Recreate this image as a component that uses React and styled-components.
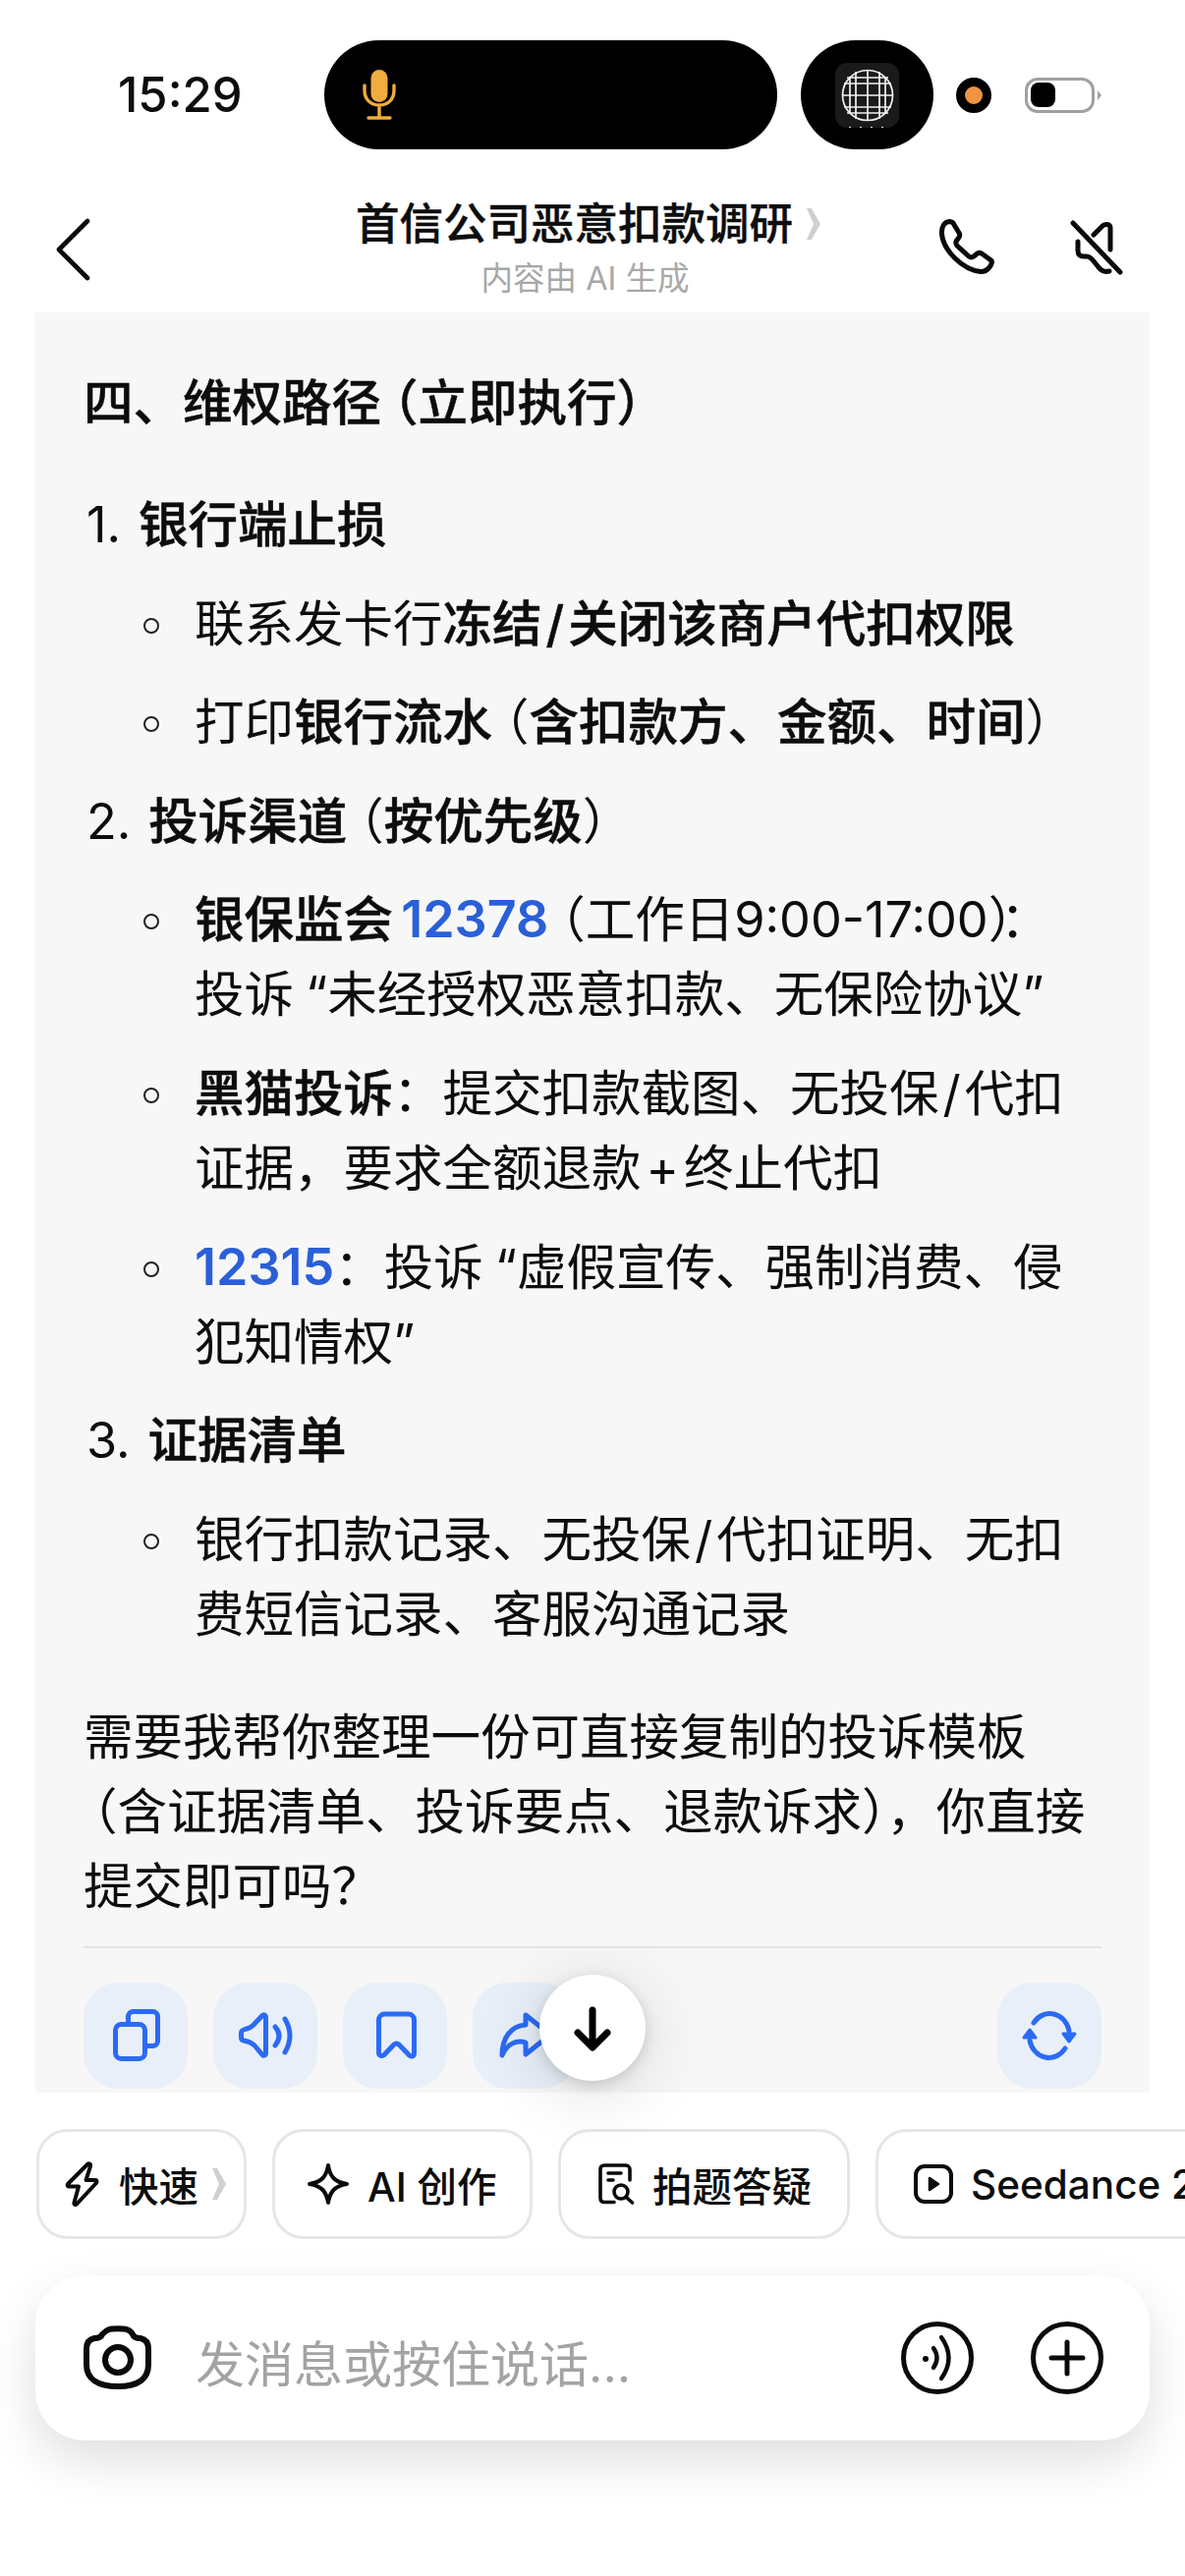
import React from "react";
import styled, { createGlobalStyle } from "styled-components";

const BLUE = "#2b6af5";

const App = () => {
    return (
        <Page lang="zh-CN">
            <GlobalStyle />
            <StatusBar>
                <Clock>15:29</Clock>
                <Island>
                    <svg width="36" height="54" viewBox="0 0 36 54" fill="none">
                        <rect x="9.5" y="1" width="17" height="33" rx="8.5" fill="#f0ac3c" />
                        <path d="M3 17v5c0 9 6 15 15 15s15-6 15-15v-5M18 37v12M7 50h22" stroke="#f0ac3c" strokeWidth="3.4" strokeLinecap="round" />
                    </svg>
                </Island>
                <AppBubble>
                    <AppTile>
                        <svg width="56" height="56" viewBox="0 0 56 56" fill="none" stroke="#f2f2f2" strokeWidth="1.7">
                            <circle cx="28" cy="28" r="25.5" />
                            <path d="M4 16h48M2.5 28h51M4 40h48M7 10h42M7 46h42M16 4v48M28 2.5v51M40 4v48M10 9v38M46 9v38" />
                        </svg>
                        <TileDots />
                    </AppTile>
                </AppBubble>
                <RecordDot />
                <Battery>
                    <BatteryFill />
                </Battery>
                <BatteryTip />
            </StatusBar>

            <NavBar>
                <BackButton>
                    <svg width="36" height="64" viewBox="0 0 36 64" fill="none">
                        <path d="M33 3 L4 32 L33 61" stroke="#0a0a0a" strokeWidth="4.6" strokeLinecap="round" strokeLinejoin="round" />
                    </svg>
                </BackButton>
                <TitleBlock>
                    <TitleRow>
                        <Title>首信公司恶意扣款调研</Title>
                        <TinyChevron />
                    </TitleRow>
                    <Subtitle>内容由 AI 生成</Subtitle>
                </TitleBlock>
                <NavActions>
                    <svg width="64" height="64" viewBox="0 0 64 64" fill="none" stroke="#0a0a0a" strokeWidth="5" strokeLinecap="round" strokeLinejoin="round">
                        <path d="M14 6.5C9 7 6 12 6.5 19C8 36 28 56 46 57.5C52 58 57 52 57.5 47.5C57.5 46.5 57 46 56 45.5L47 39C45 38 43.5 38 42 39.5L39 42C37.5 43 35.5 43 34 42L22 31C20.5 29 20.5 27.5 21.5 26L24 22.5C25 21 25 19.5 24 18L18 8C17 6.5 15.5 6.5 14 6.5Z" />
                    </svg>
                    <svg width="64" height="64" viewBox="0 0 64 64" fill="none" stroke="#0a0a0a" strokeWidth="5" strokeLinecap="round" strokeLinejoin="round">
                        <path d="M7 8L55 58M28 20L37 11C40 8.5 45 9 45 13V35M12 27V36C12 40 14 42 18 42H21C24 42 26 44 29 48L33 53C36 57 40 58 44 57" />
                    </svg>
                </NavActions>
            </NavBar>

            <Card>
                <Heading>四、维权路径<Open>（</Open>立即执行<Close>）</Close></Heading>

                <StepRow><Num>1.</Num><strong>银行端止损</strong></StepRow>
                <SubItem><Ring /><div>联系发卡行<strong>冻结<Wide $gap={4}>/</Wide>关闭该商户代扣权限</strong></div></SubItem>
                <SubItem><Ring /><div>打印<strong>银行流水</strong><Open>（</Open><strong>含扣款方、金额、时间</strong><Close>）</Close></div></SubItem>

                <StepRow><Num>2.</Num><strong>投诉渠道</strong><Open>（</Open><strong>按优先级</strong><Close>）</Close></StepRow>
                <SubItem><Ring /><div><strong>银保监会</strong> <LinkNum $lead={-6}>12378</LinkNum><Open>（</Open>工作日9:00-17:00<Close>）</Close>：<br />投诉<QuoteOpen>“</QuoteOpen>未经授权恶意扣款、无保险协议”</div></SubItem>
                <SubItem><Ring /><div><strong>黑猫投诉</strong>：提交扣款截图、无投保<Wide $gap={4}>/</Wide>代扣<br />证据，要求全额退款<Wide $gap={5}>+</Wide>终止代扣</div></SubItem>
                <SubItem><Ring /><div><LinkNum $lead={0}>12315</LinkNum>：投诉<QuoteOpen>“</QuoteOpen>虚假宣传、强制消费、侵<br />犯知情权”</div></SubItem>

                <StepRow><Num>3.</Num><strong>证据清单</strong></StepRow>
                <SubItem><Ring /><div>银行扣款记录、无投保<Wide $gap={4}>/</Wide>代扣证明、无扣<br />费短信记录、客服沟通记录</div></SubItem>

                <Closing>需要我帮你整理一份可直接复制的投诉模板<br /><OpenFlush>（</OpenFlush>含证据清单、投诉要点、退款诉求），你直接<br />提交即可吗？</Closing>
                <Divider />

                <ActionRow>
                    <ActionButton>
                        <ActionIcon>
                            <rect x="9.5" y="18.5" width="30" height="35" rx="6" />
                            <path d="M22.5 17v-6.5a5 5 0 0 1 5-5H47.5a5 5 0 0 1 5 5V35.5a5 5 0 0 1-5 5H41" />
                        </ActionIcon>
                    </ActionButton>
                    <ActionButton>
                        <ActionIcon>
                            <path d="M30.5 11C30.5 9 28.5 8 27 9.5L18 19Q15 22 11 23L8 24Q5.5 25 5.5 27V32Q5.5 34.5 8 35L12 36Q16 37 19 40L27 49.5C28.5 51 30.5 50 30.5 48Z" />
                            <path d="M40 21Q48 30 40 40M50 13Q60 30 50 47" />
                        </ActionIcon>
                    </ActionButton>
                    <ActionButton>
                        <ActionIcon>
                            <path d="M13.5 14a6 6 0 0 1 6-6H43.5a6 6 0 0 1 6 6V48c0 3-3 4-5 2L34 39c-1.5-1.5-3.5-1.5-5 0L19 49.5c-2 2-5.5 1-5.5-2Z" />
                        </ActionIcon>
                    </ActionButton>
                    <ActionButton>
                        <ActionIcon>
                            <path d="M31 9L56 29L31 49V37C22 34 12 38 7 50C7 32 16 20 31 19Z" />
                        </ActionIcon>
                    </ActionButton>
                    <ActionSpacer />
                    <ActionButton>
                        <ActionIcon>
                            <path d="M14 17A20 22 0 0 1 50 25M46 43A20 22 0 0 1 10 35" />
                            <path d="M44 28H56L50 36ZM4 32H16L10 24Z" fill={BLUE} strokeWidth="3" />
                        </ActionIcon>
                    </ActionButton>
                </ActionRow>
            </Card>

            <ScrollDown>
                <svg width="60" height="60" viewBox="0 0 60 60" fill="none" stroke="#000" strokeWidth="7" strokeLinecap="round" strokeLinejoin="round">
                    <path d="M30 12V48M15 35L30 50L45 35" />
                </svg>
            </ScrollDown>

            <ChipRow>
                <Chip $w={214} $pad={23}>
                    <svg width="40" height="50" viewBox="0 0 40 50" fill="none" stroke="#0a0a0a" strokeWidth="4" strokeLinejoin="round">
                        <path d="M26 5L6 25C5 26.5 6 27.5 7.5 27.5H17L12.5 44C12 46 14 46.5 15 45.5L35 24C36 22.5 35.5 21 34 21H24.5L29 7C29.5 4.5 27.5 3.5 26 5Z" />
                    </svg>
                    <ChipLabel>快速</ChipLabel>
                    <ChipChevron />
                </Chip>
                <Chip $w={265} $pad={32}>
                    <svg width="44" height="44" viewBox="0 0 44 44" fill="none" stroke="#0a0a0a" strokeWidth="4" strokeLinejoin="round">
                        <path d="M22 3C24 15 29 20 41 22C29 24 24 29 22 41C20 29 15 24 3 22C15 20 20 15 22 3Z" />
                    </svg>
                    <ChipLabel>AI 创作</ChipLabel>
                </Chip>
                <Chip $w={297} $pad={37}>
                    <svg width="38" height="42" viewBox="0 0 38 42" fill="none" stroke="#0a0a0a" strokeWidth="3.6" strokeLinecap="round">
                        <path d="M33 17V6C33 3.5 31 2 28.5 2H7C4.5 2 3 3.5 3 6V35C3 38 4.5 39.5 7 39.5H17M11 10H24M11 17H16" />
                        <circle cx="24" cy="29" r="7" />
                        <path d="M29.5 34.5L35.5 40" />
                    </svg>
                    <ChipLabel>拍题答疑</ChipLabel>
                </Chip>
                <Chip $w={440} $pad={36}>
                    <svg width="40" height="40" viewBox="0 0 40 40" fill="none" stroke="#0a0a0a" strokeWidth="4">
                        <rect x="2" y="2" width="36" height="36" rx="9" />
                        <path d="M16 14L25 20L16 26Z" fill="#0a0a0a" strokeWidth="2.5" strokeLinejoin="round" />
                    </svg>
                    <ChipLabel>Seedance 2.0</ChipLabel>
                </Chip>
            </ChipRow>

            <Composer>
                <svg width="74" height="70" viewBox="0 0 74 70" fill="none" stroke="#0a0a0a" strokeWidth="6" strokeLinejoin="round">
                    <path d="M28 6C31 5 43 5 46 6C49 7 51 9 52 11C53 14 56 15 60 15C65 16 68 20 68 26V42C68 56 58 64 37 64C16 64 5 56 5 42V26C5 20 8 16 13 15C17 15 20 14 21 11C23 9 25 7 28 6Z" />
                    <circle cx="37" cy="37" r="13" />
                </svg>
                <Placeholder>发消息或按住说话...</Placeholder>
                <ComposerActions>
                    <svg width="74" height="74" viewBox="0 0 74 74" fill="none" stroke="#0a0a0a" strokeWidth="5" strokeLinecap="round">
                        <circle cx="37" cy="37" r="34.5" />
                        <circle cx="25" cy="38" r="2" fill="#0a0a0a" strokeWidth="2" />
                        <path d="M33 27Q40 37 33 47M41 16Q56 37 41 58" strokeWidth="4.4" />
                    </svg>
                    <svg width="74" height="74" viewBox="0 0 74 74" fill="none" stroke="#0a0a0a" strokeWidth="5" strokeLinecap="round">
                        <circle cx="37" cy="37" r="34.5" />
                        <path d="M37 21V53M21 37H53" />
                    </svg>
                </ComposerActions>
            </Composer>
        </Page>
    );
}

export default App;


const GlobalStyle = createGlobalStyle`
    html, body {
        margin: 0;
        padding: 0;
        background: #fff;
    }
    * {
        box-sizing: border-box;
    }
`;

const Page = styled.div`
    position: relative;
    width: 1206px;
    height: 2622px;
    overflow: hidden;
    background: #fff;
    color: #0d0d0d;
    font-family: Inter, "Noto Sans CJK SC", sans-serif;
`;

const StatusBar = styled.div`
    display: flex;
    align-items: center;
    height: 111px;
    margin-top: 41px;
    padding-left: 120px;
`;

const Clock = styled.div`
    width: 210px;
    font-size: 49px;
    font-weight: 500;
`;

const Island = styled.div`
    display: flex;
    align-items: center;
    width: 461px;
    height: 111px;
    padding-left: 38px;
    background: #000;
    border-radius: 56px;
`;

const AppBubble = styled.div`
    display: flex;
    align-items: center;
    justify-content: center;
    width: 135px;
    height: 111px;
    margin-left: 24px;
    background: #000;
    border-radius: 56px;
`;

const AppTile = styled.div`
    position: relative;
    display: flex;
    align-items: center;
    justify-content: center;
    width: 65px;
    height: 66px;
    background: #1a1a1a;
    border-radius: 12px;
`;

const TileDots = styled.div`
    position: absolute;
    left: 14px;
    right: 14px;
    bottom: 0;
    height: 1px;
    background: repeating-linear-gradient(90deg, #ddd 0 2px, transparent 2px 11px);
`;

const RecordDot = styled.div`
    width: 36px;
    height: 36px;
    margin-left: 23px;
    border: 9px solid #000;
    border-radius: 50%;
    background: #ee9443;
`;

const Battery = styled.div`
    display: flex;
    align-items: center;
    width: 71px;
    height: 36px;
    margin-left: 34px;
    padding: 0 3px;
    border: 3px solid #a0a0a0;
    border-radius: 13px;
`;

const BatteryFill = styled.div`
    width: 25px;
    height: 25px;
    background: #000;
    border-radius: 8px;
`;

const BatteryTip = styled.div`
    width: 0;
    height: 0;
    margin-left: 3px;
    border-left: 4px solid #a0a0a0;
    border-top: 5px solid transparent;
    border-bottom: 5px solid transparent;
`;

const NavBar = styled.div`
    display: grid;
    grid-template-columns: 1fr auto 1fr;
    align-items: center;
    height: 166px;
    padding: 34px 57px 14px 56px;
`;

const BackButton = styled.div`
    display: flex;
    align-items: center;
    padding-top: 14px;
`;

const TitleBlock = styled.div`
    display: flex;
    flex-direction: column;
    align-items: center;
    margin-right: 8px;
    padding-top: 12px;
`;

const TitleRow = styled.div`
    display: flex;
    align-items: center;
    gap: 14px;
    height: 60px;
`;

const Title = styled.div`
    font-size: 44.5px;
    font-weight: 500;
    line-height: 60px;
    -webkit-text-stroke: 0.4px #0d0d0d;
`;

const TinyChevron = styled.span`
    display: block;
    flex: none;
    width: 14px;
    height: 32px;
    background: #cfcfcf;
    clip-path: polygon(0 0, 35% 0, 100% 50%, 35% 100%, 0 100%, 50% 50%);
`;

const ChipChevron = styled(TinyChevron)`
    margin-left: 14px;
`;

const Subtitle = styled.div`
    margin-top: 3px;
    margin-right: 6px;
    font-size: 32.5px;
    line-height: 46px;
    color: #a8a8a8;
`;

const NavActions = styled.div`
    display: flex;
    justify-content: flex-end;
    gap: 69px;
    padding-top: 8px;
`;

const Card = styled.div`
    margin: 0 36px;
    height: 1812px;
    padding: 54px 49px 0;
    background: #f7f7f7;
    font-size: 50.5px;
    line-height: 76px;
    white-space: nowrap;

    strong {
        font-weight: 500;
        -webkit-text-stroke: 0.5px #0d0d0d;
    }
`;

const Heading = styled.div`
    font-weight: 500;
    -webkit-text-stroke: 0.5px #0d0d0d;
`;

const Open = styled.span`
    margin-left: -13px;
`;

const OpenFlush = styled.span`
    margin-left: -16px;
`;

const Close = styled.span`
    margin-right: -13px;
`;

const Wide = styled.span`
    margin: 0 ${props => props.$gap}px;
`;

const QuoteOpen = styled.span`
    margin-left: 12px;
`;

const StepRow = styled.div`
    margin-top: 24.6px;
    padding-left: 3px;

    ${Heading} + & {
        margin-top: 48px;
    }
`;

const Num = styled.span`
    display: inline-block;
    margin-right: 18px;
    font-weight: 400;
`;

const SubItem = styled.div`
    display: flex;
    margin-top: 24.6px;
`;

const Ring = styled.span`
    flex: none;
    width: 16px;
    height: 16px;
    margin: 32px 36px 0 61px;
    border: 2px solid #222;
    border-radius: 50%;
`;

const LinkNum = styled.span`
    margin-left: ${props => props.$lead}px;
    font-size: 52px;
    font-weight: 600;
    color: #2a5fd8;
`;

const Closing = styled.div`
    margin-top: 49px;
`;

const Divider = styled.div`
    height: 2px;
    margin-top: 23px;
    background: #e4e4e4;
`;

const ActionRow = styled.div`
    display: flex;
    gap: 26px;
    margin-top: 35px;
`;

const ActionButton = styled.div`
    display: flex;
    align-items: center;
    justify-content: center;
    width: 106px;
    height: 108px;
    background: #e8eff8;
    border-radius: 36px;
`;

const ActionSpacer = styled.div`
    flex: 1;
`;

const ActionIcon = styled.svg.attrs({
    width: 60,
    height: 60,
    viewBox: "0 0 60 60",
    fill: "none",
    stroke: BLUE,
    strokeWidth: 5,
    strokeLinecap: "round",
    strokeLinejoin: "round"
})`
    display: block;
`;

const ScrollDown = styled.div`
    position: absolute;
    left: 549px;
    top: 2010px;
    display: flex;
    align-items: center;
    justify-content: center;
    width: 108px;
    height: 108px;
    background: #fff;
    border-radius: 50%;
    box-shadow: 0 4px 14px rgba(0, 0, 0, 0.14), 0 10px 70px rgba(0, 0, 0, 0.14);
`;

const ChipRow = styled.div`
    display: flex;
    gap: 26px;
    margin-top: 37px;
    padding-left: 37px;
`;

const Chip = styled.div`
    display: flex;
    align-items: center;
    flex: none;
    width: ${props => props.$w}px;
    height: 112px;
    padding-left: ${props => props.$pad}px;
    background: #fff;
    border: 3px solid #e6e6e6;
    border-radius: 32px;
    font-size: 40.5px;
    font-weight: 500;
`;

const ChipLabel = styled.span`
    margin-left: 18px;
    white-space: nowrap;
`;

const Composer = styled.div`
    display: flex;
    align-items: center;
    height: 168px;
    margin: 37px 36px 0;
    padding: 0 47px 0 47px;
    background: #fff;
    border-radius: 50px;
    box-shadow: 0 20px 50px rgba(0, 0, 0, 0.13);
`;

const Placeholder = styled.div`
    flex: 1;
    margin-left: 42px;
    padding-top: 6px;
    font-size: 50px;
    color: #a3a3a3;
`;

const ComposerActions = styled.div`
    display: flex;
    gap: 58px;
`;
